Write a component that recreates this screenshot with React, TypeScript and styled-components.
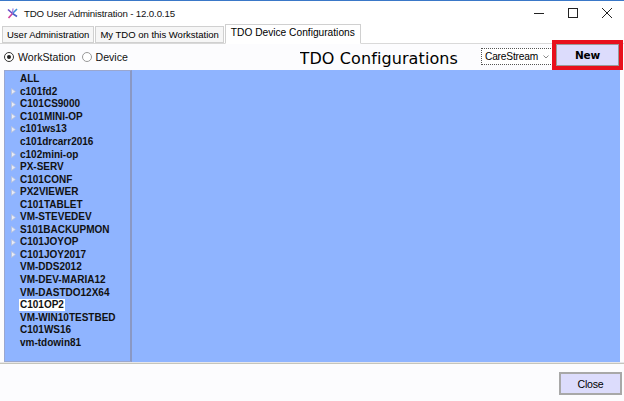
import React from 'react';
import styled, { createGlobalStyle } from 'styled-components';

const GlobalStyle = createGlobalStyle`
  html, body {
    margin: 0;
    padding: 0;
    background: #ffffff;
  }
  * {
    box-sizing: border-box;
  }
`;

const Window = styled.div`
  width: 624px;
  height: 401px;
  display: flex;
  flex-direction: column;
  background: #fcfcfe;
  border-top: 1px solid #3a78c8;
  font-family: 'Liberation Sans', Arial, sans-serif;
  color: #000;
  overflow: hidden;
`;

const TitleBar = styled.div`
  height: 24px;
  display: flex;
  align-items: center;
  background: #ffffff;
  padding-left: 7px;
`;

const TitleText = styled.span`
  margin-left: 6px;
  font-size: 9.7px;
  letter-spacing: -0.15px;
  flex: 1;
  color: #111;
`;

const WindowButtons = styled.div`
  display: flex;
  height: 100%;
`;

const WindowButton = styled.div`
  width: 34px;
  height: 100%;
  display: flex;
  align-items: center;
  justify-content: center;
`;

const TabStrip = styled.div`
  height: 19px;
  display: flex;
  align-items: flex-end;
  padding-left: 2px;
  background: #ffffff;
  border-bottom: 1px solid #d9d9d9;
`;

const Tab = styled.div<{ $active?: boolean }>`
  height: ${({ $active }) => ($active ? '20px' : '17px')};
  margin-bottom: ${({ $active }) => ($active ? '-1px' : '0')};
  padding: 0 ${({ $active }) => ($active ? '5px' : '4px')};
  padding-bottom: ${({ $active }) => ($active ? '3px' : '0')};
  margin-right: ${({ $active }) => ($active ? '0' : '1px')};
  display: flex;
  align-items: center;
  font-size: ${({ $active }) => ($active ? '10.2px' : '9.5px')};
  background: ${({ $active }) => ($active ? '#ffffff' : '#f6f6f6')};
  border: 1px solid #d0d0d0;
  border-bottom: 1px solid ${({ $active }) => ($active ? '#ffffff' : '#d0d0d0')};
  position: relative;
  z-index: ${({ $active }) => ($active ? 1 : 0)};
`;

const TabPage = styled.div`
  flex: 1;
  display: flex;
  flex-direction: column;
  background: #fcfcfe;
`;

const HeaderRow = styled.div`
  height: 26px;
  display: flex;
  align-items: center;
  padding-left: 4px;
`;

const RadioLabel = styled.label`
  display: flex;
  align-items: center;
  font-size: 10.6px;
  margin-right: 6px;
  color: #111;
`;

const RadioCircle = styled.span<{ $checked?: boolean }>`
  width: 10px;
  height: 10px;
  border-radius: 50%;
  border: 1px solid ${({ $checked }) => ($checked ? '#333' : '#999')};
  background: #fff;
  margin-right: 4px;
  display: flex;
  align-items: center;
  justify-content: center;
  &::after {
    content: '';
    width: 4px;
    height: 4px;
    border-radius: 50%;
    background: ${({ $checked }) => ($checked ? '#222' : 'transparent')};
  }
`;

const PageTitle = styled.div`
  margin-left: auto;
  margin-right: 23px;
  align-self: flex-start;
  margin-top: 5px;
  height: 19px;
  overflow: hidden;
  font-family: 'DejaVu Sans', 'Noto Sans', sans-serif;
  font-size: 16px;
  line-height: 20px;
  letter-spacing: 0.1px;
`;

const Select = styled.div`
  width: 72px;
  height: 17px;
  margin-top: 4px;
  align-self: flex-start;
  display: flex;
  align-items: center;
  justify-content: space-between;
  padding: 0 3px 0 3px;
  border: 1px dotted #555;
  background: #fff;
  font-size: 10.2px;
  letter-spacing: -0.2px;
  white-space: nowrap;
`;

const Caret = styled.span`
  display: flex;
  align-items: center;
  flex: none;
`;

const HighlightFrame = styled.div`
  width: 71px;
  height: 30px;
  align-self: flex-start;
  margin-top: -4px;
  margin-left: -1px;
  margin-right: 1px;
  border: 4px solid #e8101c;
  display: flex;
`;

const Button = styled.div`
  flex: 1;
  display: flex;
  align-items: center;
  justify-content: center;
  background: #dcdcfc;
  border: 1px solid #9a9a9a;
  font-size: 10.5px;
  font-family: 'DejaVu Sans', sans-serif;
  font-weight: bold;
  letter-spacing: -0.2px;
`;

const BluePanel = styled.div`
  flex: 1;
  margin: 0 4px 0 4px;
  background: #8fb4ff;
  display: flex;
`;

const Tree = styled.ul`
  width: 128px;
  margin: 0;
  padding: 2px 0 0 0;
  list-style: none;
  border: 1px solid #9aa7cf;
  border-right: 2px solid #8a98c4;
`;

const TreeItem = styled.li`
  height: 12.55px;
  display: flex;
  align-items: center;
  padding-left: 6px;
  font-weight: bold;
  font-size: 10px;
  color: #111;
`;

const Expander = styled.span`
  width: 8px;
  display: flex;
  align-items: center;
`;

const ItemText = styled.span<{ $selected?: boolean }>`
  padding: 0 1px;
  line-height: 12px;
  background: ${({ $selected }) => ($selected ? '#ffffff' : 'transparent')};
`;

const Footer = styled.div`
  height: 39px;
  border-top: 1px solid #e6e6ea;
  box-shadow: inset 0 1px 0 #c5c5bc;
  display: flex;
  justify-content: flex-end;
  align-items: flex-start;
  padding: 9px 2px 0 0;
  background: #fcfcfe;
`;

const CloseButton = styled(Button)`
  flex: none;
  width: 63px;
  height: 23px;
  font-weight: normal;
  font-family: 'Liberation Sans', Arial, sans-serif;
  font-size: 10.6px;
  border: 2px solid #a8a8a8;
`;

const AppIcon = () => (
  <svg width="11" height="11" viewBox="0 0 11 11">
    <line x1="1" y1="1.5" x2="5.5" y2="5.5" stroke="#6a4fc8" strokeWidth="1.6" />
    <line x1="10" y1="1" x2="5.5" y2="5.5" stroke="#3a8fd8" strokeWidth="1.6" />
    <line x1="1.5" y1="10" x2="5.5" y2="5.5" stroke="#d0409a" strokeWidth="1.6" />
    <line x1="10" y1="8.5" x2="5.5" y2="5.5" stroke="#4a60c8" strokeWidth="1.6" />
    <line x1="6" y1="0.5" x2="5.5" y2="5.5" stroke="#9a7ae0" strokeWidth="1.2" />
  </svg>
);

const ExpandArrow = () => (
  <svg width="5" height="7" viewBox="0 0 5 7">
    <polygon points="0.5,0.5 4.5,3.5 0.5,6.5" fill="#e8ecf8" stroke="#b8c0d8" strokeWidth="0.8" />
  </svg>
);

type Device = { name: string; expandable?: boolean; selected?: boolean };

const devices: Device[] = [
  { name: 'ALL' },
  { name: 'c101fd2', expandable: true },
  { name: 'C101CS9000', expandable: true },
  { name: 'C101MINI-OP', expandable: true },
  { name: 'c101ws13', expandable: true },
  { name: 'c101drcarr2016' },
  { name: 'c102mini-op', expandable: true },
  { name: 'PX-SERV', expandable: true },
  { name: 'C101CONF', expandable: true },
  { name: 'PX2VIEWER', expandable: true },
  { name: 'C101TABLET' },
  { name: 'VM-STEVEDEV', expandable: true },
  { name: 'S101BACKUPMON', expandable: true },
  { name: 'C101JOYOP', expandable: true },
  { name: 'C101JOY2017', expandable: true },
  { name: 'VM-DDS2012' },
  { name: 'VM-DEV-MARIA12' },
  { name: 'VM-DASTDO12X64' },
  { name: 'C101OP2', selected: true },
  { name: 'VM-WIN10TESTBED' },
  { name: 'C101WS16' },
  { name: 'vm-tdowin81' },
];

const App: React.FC = () => {
  return (
    <>
      <GlobalStyle />
      <Window>
        <TitleBar>
          <AppIcon />
          <TitleText>TDO User Administration - 12.0.0.15</TitleText>
          <WindowButtons>
            <WindowButton>
              <svg width="10" height="10" viewBox="0 0 10 10">
                <line x1="0" y1="5.5" x2="10" y2="5.5" stroke="#222" strokeWidth="1" />
              </svg>
            </WindowButton>
            <WindowButton>
              <svg width="10" height="10" viewBox="0 0 10 10">
                <rect x="0.5" y="0.5" width="9" height="9" fill="none" stroke="#222" strokeWidth="1" />
              </svg>
            </WindowButton>
            <WindowButton>
              <svg width="10" height="10" viewBox="0 0 10 10">
                <line x1="0" y1="0" x2="10" y2="10" stroke="#222" strokeWidth="1" />
                <line x1="10" y1="0" x2="0" y2="10" stroke="#222" strokeWidth="1" />
              </svg>
            </WindowButton>
          </WindowButtons>
        </TitleBar>
        <TabStrip>
          <Tab>User Administration</Tab>
          <Tab>My TDO on this Workstation</Tab>
          <Tab $active>TDO Device Configurations</Tab>
        </TabStrip>
        <TabPage>
          <HeaderRow>
            <RadioLabel>
              <RadioCircle $checked />
              WorkStation
            </RadioLabel>
            <RadioLabel>
              <RadioCircle />
              Device
            </RadioLabel>
            <PageTitle>TDO Configurations</PageTitle>
            <Select>
              CareStream
              <Caret>
                <svg width="6" height="4" viewBox="0 0 6 4">
                  <polyline points="0.5,0.5 3,3 5.5,0.5" fill="none" stroke="#888" strokeWidth="1" />
                </svg>
              </Caret>
            </Select>
            <HighlightFrame>
              <Button>New</Button>
            </HighlightFrame>
          </HeaderRow>
          <BluePanel>
            <Tree>
              {devices.map(d => (
                <TreeItem key={d.name}>
                  <Expander>{d.expandable && <ExpandArrow />}</Expander>
                  <ItemText $selected={d.selected}>{d.name}</ItemText>
                </TreeItem>
              ))}
            </Tree>
          </BluePanel>
          <Footer>
            <CloseButton>Close</CloseButton>
          </Footer>
        </TabPage>
      </Window>
    </>
  );
};

export default App;
